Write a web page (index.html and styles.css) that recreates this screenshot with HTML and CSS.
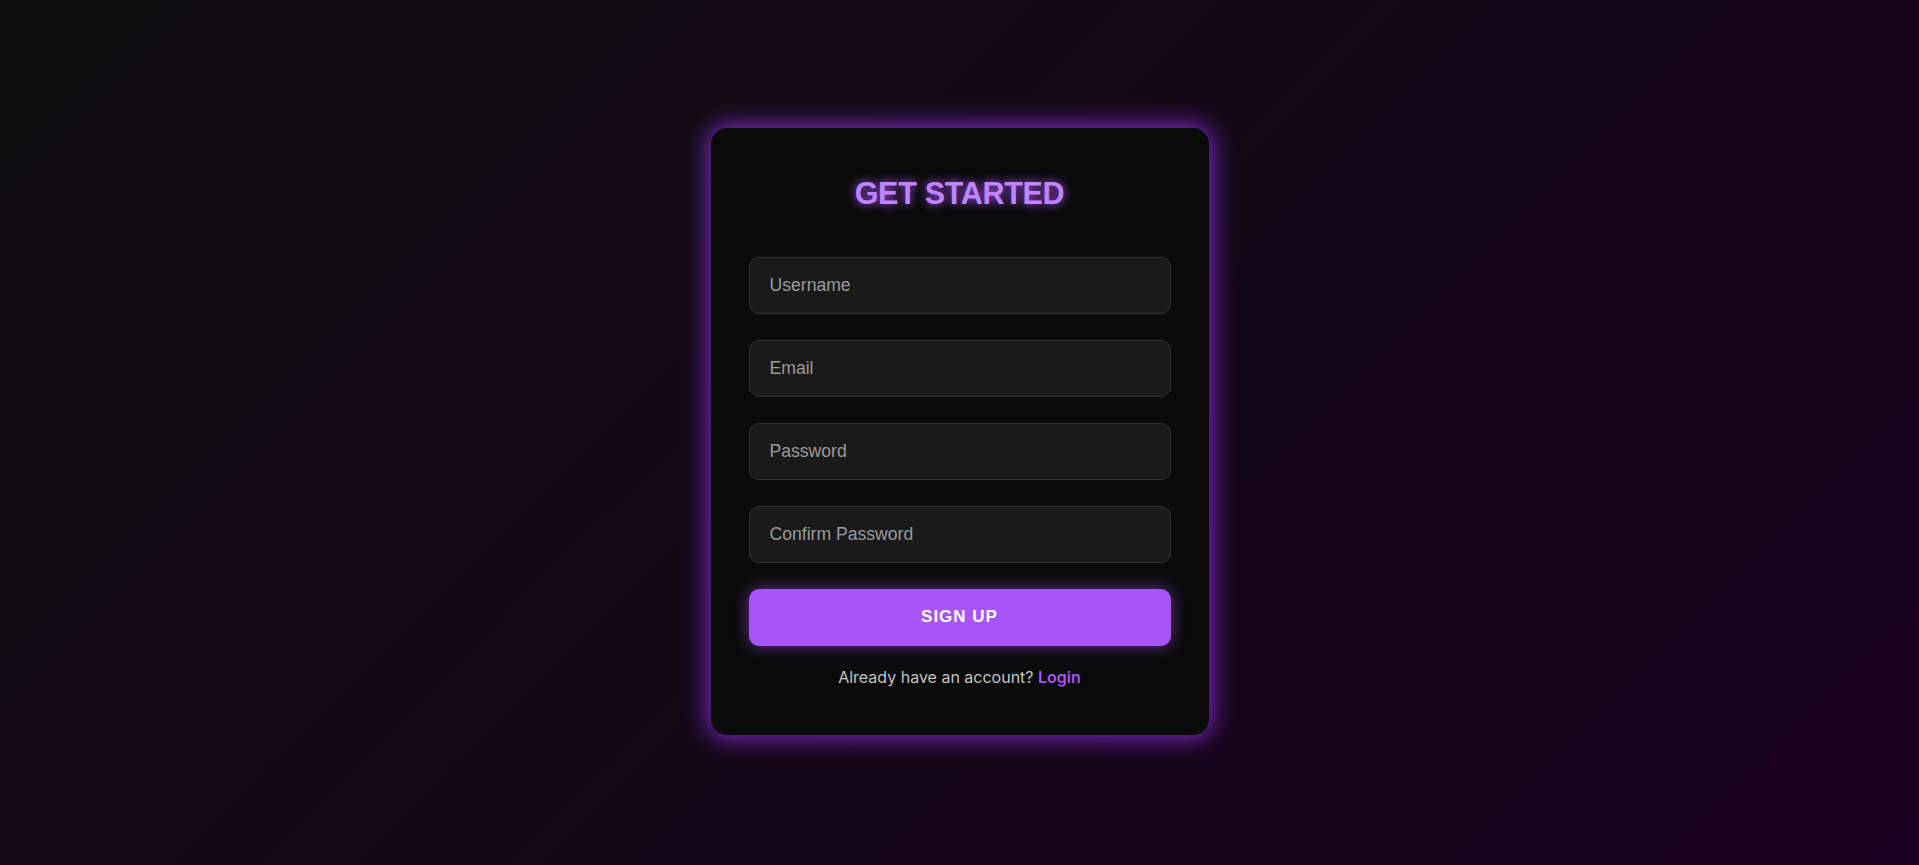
FILE: index.html
```html
<!DOCTYPE html>
<html lang="en">
<head>
<meta charset="utf-8">
<title>Get Started</title>
<link rel="stylesheet" href="styles.css">
</head>
<body>
  <main class="page">
    <form class="card">
      <h2 class="title">GET STARTED</h2>
      <div class="fields">
        <input class="field" type="text" placeholder="Username">
        <input class="field" type="email" placeholder="Email">
        <input class="field" type="password" placeholder="Password">
        <input class="field" type="password" placeholder="Confirm Password">
        <button class="submit" type="button">SIGN UP</button>
      </div>
      <p class="switch">Already have an account? <a class="switch-link" href="#">Login</a></p>
    </form>
  </main>
</body>
</html>
```

FILE: styles.css
```css
* { box-sizing: border-box; }

html, body {
  margin: 0;
  height: 100%;
}

body {
  font-family: Inter, "Noto Sans", sans-serif;
  background: linear-gradient(135deg, #0f0f0f 0%, #1a0020 100%);
  color: #ccc;
}

.page {
  min-height: 100vh;
  padding-bottom: 2px;
  display: flex;
  align-items: center;
  justify-content: center;
}

.card {
  width: 498px;
  padding: 38px;
  background: #0b0b0b;
  border-radius: 16px;
  box-shadow: 0 0 24px 2px rgba(147, 51, 234, 0.9);
  display: flex;
  flex-direction: column;
}

.title {
  margin: 11px 0 46px;
  font-family: "Liberation Sans", Arial, sans-serif;
  font-weight: 700;
  font-size: 30.5px;
  letter-spacing: -0.3px;
  line-height: 1.1;
  text-align: center;
  color: #c084fc;
  text-shadow: 0 0 10px rgba(168, 85, 247, 1);
}

.fields {
  display: flex;
  flex-direction: column;
  gap: 26px;
}

.field {
  height: 57px;
  padding: 0 20px;
  background: #1a1a1a;
  border: 1px solid #333;
  border-radius: 10px;
  font-family: "Liberation Sans", Arial, sans-serif;
  font-size: 17.6px;
  color: #ddd;
  outline: none;
}

.field::placeholder {
  color: #9a9a9a;
}

.submit {
  height: 57px;
  border: none;
  border-radius: 10px;
  background: #a855f7;
  color: #fff;
  font-family: "Liberation Sans", Arial, sans-serif;
  font-weight: 700;
  font-size: 17px;
  letter-spacing: 1px;
  box-shadow: 0 0 15px rgba(168, 85, 247, 0.55);
  cursor: pointer;
}

.switch {
  margin: 21px 0 10px;
  text-align: center;
  font-size: 16px;
  color: #c4c4c4;
}

.switch-link {
  color: #a855f7;
  font-weight: 600;
  text-decoration: none;
}
```
